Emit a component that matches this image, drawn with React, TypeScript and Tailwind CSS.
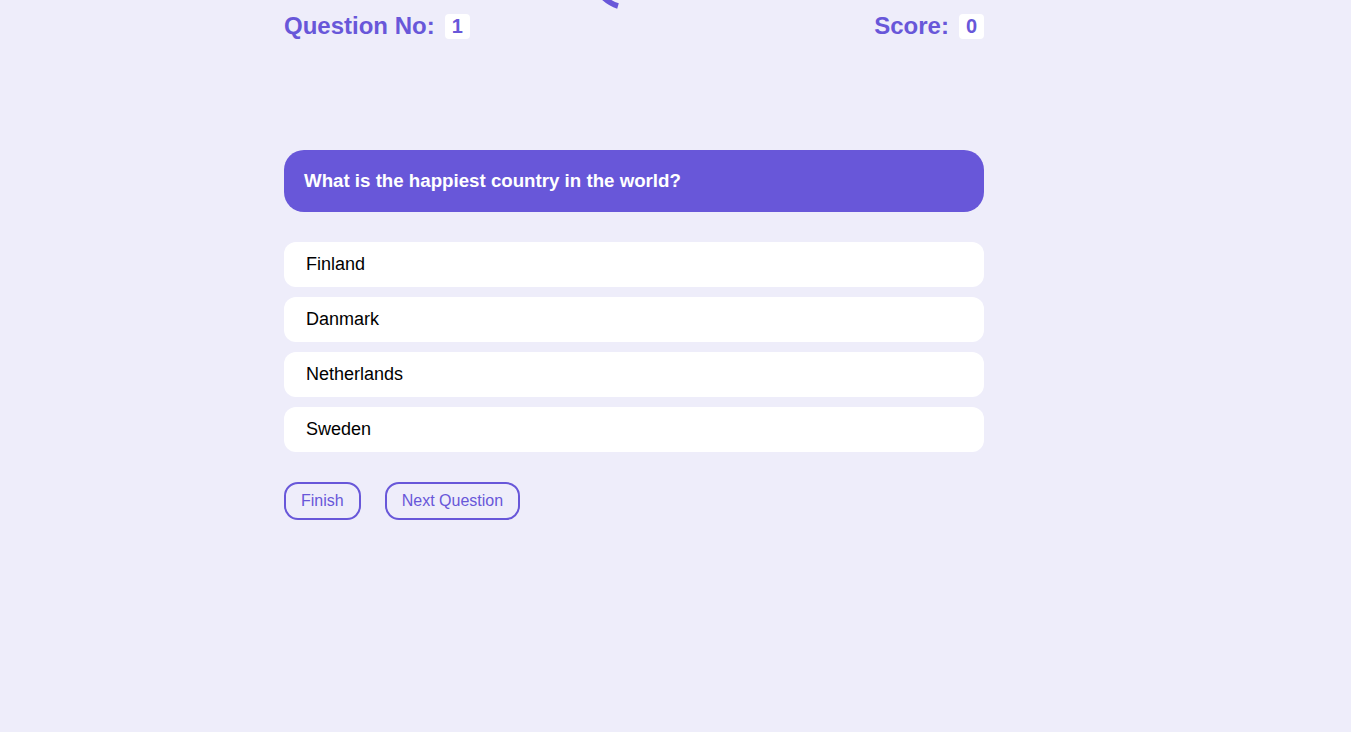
import React from 'react';

const OPTIONS = ['Finland', 'Danmark', 'Netherlands', 'Sweden'];

export default function App() {
  return (
    <div className="relative min-h-[732px] w-full bg-[#eeedfa] font-['Liberation_Sans',Arial,sans-serif] overflow-hidden">
      <svg className="absolute left-[597px] top-[-7px]" width="30" height="20" viewBox="0 0 30 20">
        <path d="M2 0 Q11 10 21 13" stroke="#6857d9" strokeWidth="5.5" fill="none" />
      </svg>
      <div className="ml-[284px] w-[700px] pt-[8px]">
        <div className="flex items-center justify-between">
          <Stat label="Question No:" value="1" />
          <Stat label="Score:" value="0" />
        </div>

        <div className="mt-[106px] rounded-[20px] bg-[#6857d9] px-5 h-[62px] flex items-center">
          <h2 className="text-[18.7px] font-bold text-white">What is the happiest country in the world?</h2>
        </div>

        <div className="mt-[30px] flex flex-col gap-[10px]">
          {OPTIONS.map(o => (
            <button
              key={o}
              className="h-[45px] rounded-[12px] bg-white px-[22px] text-left text-[18px] text-black"
            >
              {o}
            </button>
          ))}
        </div>

        <div className="mt-[30px] flex gap-6">
          <button className="h-[38px] rounded-[14px] border-2 border-[#6857d9] px-[15px] text-[16px] text-[#6857d9]">Finish</button>
          <button className="h-[38px] rounded-[14px] border-2 border-[#6857d9] px-[15px] text-[16px] text-[#6857d9]">Next Question</button>
        </div>
      </div>
    </div>
  );
}

function Stat({ label, value }: { label: string; value: string }) {
  return (
    <div className="flex items-center gap-[10px]">
      <span className="text-[24px] font-bold text-[#6857d9]">{label}</span>
      <span className="h-[25px] min-w-[25px] rounded-[4px] bg-white px-[7px] flex items-center justify-center text-[20px] font-bold text-[#6857d9]">{value}</span>
    </div>
  );
}
